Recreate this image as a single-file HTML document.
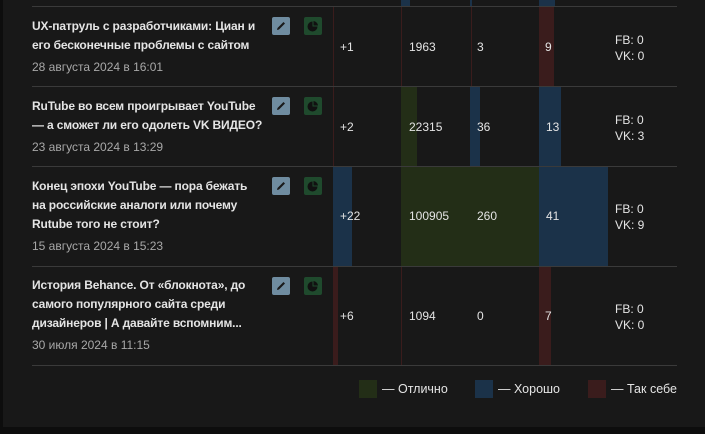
<!DOCTYPE html>
<html><head><meta charset="utf-8"><style>
body{margin:0;width:705px;height:434px;background:#0d0d0d;overflow:hidden;position:relative;font-family:"Liberation Sans",Arial,sans-serif;}
.panel{position:absolute;left:3px;top:0;width:702px;height:427px;background:#181818;}
.a{position:absolute;}
.sep{position:absolute;left:32px;width:645px;height:1px;background:#3a3a3a;}
.t{position:absolute;left:32px;width:245px;font-weight:bold;font-size:12px;line-height:19px;color:#e4e4e4;letter-spacing:-0.15px;}
.d{position:absolute;left:32px;font-size:12px;color:#a8a8a8;}
.n{position:absolute;font-size:12px;color:#e4e4e4;}
.g{background:#232e17}.b{background:#1b3249}.r{background:#3a1c1c}
.ed{position:absolute;left:272px;width:18px;height:18px;background:#6f8ca0;border-radius:2px}
.pi{position:absolute;left:304px;width:18px;height:18px;background:#1f4a2d;border-radius:2px}
.lg{position:absolute;top:380px;width:18px;height:18px}
.lt{position:absolute;top:382px;font-size:12.5px;color:#e4e4e4}
</style></head><body>
<div class="panel"></div>
<div class="a b" style="left:401px;top:0;width:9px;height:6px"></div>
<div class="a b" style="left:470px;top:0;width:2px;height:6px"></div>
<div class="a b" style="left:539px;top:0;width:16px;height:6px"></div>

<div class="a r" style="left:333px;top:6px;width:1px;height:80px"></div>
<div class="a r" style="left:401px;top:6px;width:1px;height:80px"></div>
<div class="a r" style="left:471px;top:6px;width:1px;height:80px"></div>
<div class="a r" style="left:539px;top:6px;width:15px;height:80px"></div>

<div class="a r" style="left:333px;top:87px;width:1px;height:80px"></div>
<div class="a g" style="left:401px;top:87px;width:16px;height:80px"></div>
<div class="a b" style="left:470px;top:87px;width:10px;height:80px"></div>
<div class="a b" style="left:539px;top:87px;width:22px;height:80px"></div>

<div class="a b" style="left:333px;top:167px;width:19px;height:99px"></div>
<div class="a g" style="left:401px;top:167px;width:138px;height:99px"></div>
<div class="a b" style="left:539px;top:167px;width:69px;height:99px"></div>

<div class="a r" style="left:333px;top:266px;width:5px;height:99px"></div>
<div class="a r" style="left:401px;top:266px;width:1px;height:99px"></div>
<div class="a r" style="left:539px;top:266px;width:12px;height:99px"></div>

<div class="sep" style="top:6px"></div>
<div class="sep" style="top:86px"></div>
<div class="sep" style="top:166px"></div>
<div class="sep" style="top:266px"></div>
<div class="sep" style="top:365px"></div>

<div class="t" style="top:17px">UX-патруль с разработчиками: Циан и<br>его бесконечные проблемы с сайтом</div>
<div class="d" style="top:60px">28 августа 2024 в 16:01</div>
<div class="t" style="top:97px">RuTube во всем проигрывает YouTube<br>— а сможет ли его одолеть VK ВИДЕО?</div>
<div class="d" style="top:140px">23 августа 2024 в 13:29</div>
<div class="t" style="top:177px">Конец эпохи YouTube — пора бежать<br>на российские аналоги или почему<br>Rutube того не стоит?</div>
<div class="d" style="top:239px">15 августа 2024 в 15:23</div>
<div class="t" style="top:276px">История Behance. От «блокнота», до<br>самого популярного сайта среди<br>дизайнеров | А давайте вспомним...</div>
<div class="d" style="top:338px">30 июля 2024 в 11:15</div>

<svg width="0" height="0" style="position:absolute"><defs>
<g id="pen"><path d="M5 13 L5.5 11 L11.5 5 L13 6.5 L7 12.5 Z" fill="#1a1a1a"/></g>
<g id="pie"><path d="M8.5 4.5 A5 5 0 1 0 13.5 9.5 L8.5 9.5 Z" fill="#111"/><path d="M9.5 4 A5 5 0 0 1 14 8.5 L9.5 8.5 Z" fill="#111"/></g>
</defs></svg>
<svg class="ed" style="top:17px" viewBox="0 0 18 18"><use href="#pen"/></svg>
<svg class="pi" style="top:17px" viewBox="0 0 18 18"><use href="#pie"/></svg>
<svg class="ed" style="top:97px" viewBox="0 0 18 18"><use href="#pen"/></svg>
<svg class="pi" style="top:97px" viewBox="0 0 18 18"><use href="#pie"/></svg>
<svg class="ed" style="top:177px" viewBox="0 0 18 18"><use href="#pen"/></svg>
<svg class="pi" style="top:177px" viewBox="0 0 18 18"><use href="#pie"/></svg>
<svg class="ed" style="top:277px" viewBox="0 0 18 18"><use href="#pen"/></svg>
<svg class="pi" style="top:277px" viewBox="0 0 18 18"><use href="#pie"/></svg>

<div class="n" style="left:340px;top:40px">+1</div>
<div class="n" style="left:409px;top:40px">1963</div>
<div class="n" style="left:477px;top:40px">3</div>
<div class="n" style="left:545px;top:40px">9</div>
<div class="n" style="left:615px;top:32px;line-height:16px">FB: 0<br>VK: 0</div>

<div class="n" style="left:340px;top:120px">+2</div>
<div class="n" style="left:409px;top:120px">22315</div>
<div class="n" style="left:477px;top:120px">36</div>
<div class="n" style="left:546px;top:120px">13</div>
<div class="n" style="left:615px;top:112px;line-height:16px">FB: 0<br>VK: 3</div>

<div class="n" style="left:340px;top:209px">+22</div>
<div class="n" style="left:409px;top:209px">100905</div>
<div class="n" style="left:477px;top:209px">260</div>
<div class="n" style="left:546px;top:209px">41</div>
<div class="n" style="left:615px;top:201px;line-height:16px">FB: 0<br>VK: 9</div>

<div class="n" style="left:340px;top:309px">+6</div>
<div class="n" style="left:409px;top:309px">1094</div>
<div class="n" style="left:477px;top:309px">0</div>
<div class="n" style="left:545px;top:309px">7</div>
<div class="n" style="left:615px;top:301px;line-height:16px">FB: 0<br>VK: 0</div>

<div class="lg g" style="left:359px"></div><div class="lt" style="left:382px">— Отлично</div>
<div class="lg b" style="left:475px"></div><div class="lt" style="left:498px">— Хорошо</div>
<div class="lg r" style="left:588px"></div><div class="lt" style="left:611px">— Так себе</div>
</body></html>
